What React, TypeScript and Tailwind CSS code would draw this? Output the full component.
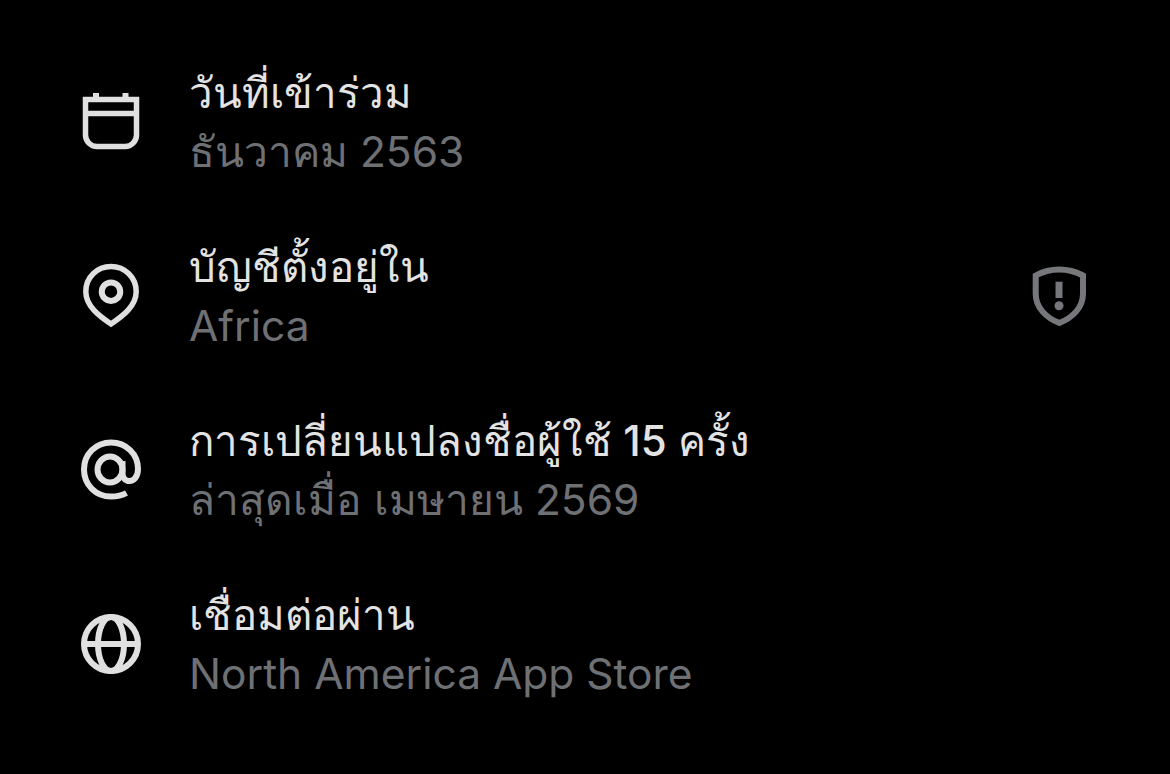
const rows = [
  { title: "วันที่เข้าร่วม", sub: "ธันวาคม 2563", icon: "calendar" },
  { title: "บัญชีตั้งอยู่ใน", sub: "Africa", icon: "pin", shield: true },
  { title: "การเปลี่ยนแปลงชื่อผู้ใช้ 15 ครั้ง", sub: "ล่าสุดเมื่อ เมษายน 2569", icon: "at" },
  { title: "เชื่อมต่อผ่าน", sub: "North America App Store", icon: "globe" },
];

function RowIcon({ name }: { name: string }) {
  if (name === "calendar")
    return (
      <svg viewBox="0 0 60 60" className="h-[60px] w-[60px]" fill="none" stroke="#e0e0e0" strokeWidth="5.5">
        <path d="M4.5 8.5h51V44a11.5 11.5 0 0 1-11.5 11.5H16A11.5 11.5 0 0 1 4.5 44z" />
        <path d="M4.5 22.5h51" />
        <path d="M15 2v7M44.5 2v7" strokeWidth="6" />
      </svg>
    );
  if (name === "pin")
    return (
      <svg viewBox="0 0 60 60" className="h-[60px] w-[60px] overflow-visible" fill="none" stroke="#e0e0e0" strokeWidth="5.5">
        <path d="M30 1.5C16 1.5 4.8 12.5 4.8 26.5 4.8 41 18 51 30 59 42 51 55.2 41 55.2 26.5 55.2 12.5 44 1.5 30 1.5z" />
        <circle cx="30" cy="26.7" r="9.25" strokeWidth="6" />
      </svg>
    );
  if (name === "at")
    return (
      <svg viewBox="0 0 60 60" className="h-[60px] w-[60px] overflow-visible" fill="none" stroke="#e0e0e0" strokeWidth="6">
        <ellipse cx="29" cy="30.5" rx="12.5" ry="13" />
        <path d="M41.5 22v12c0 5 3 8 7 8s8.5-4 8.5-12C57 15 45 3.5 30 3.5S3 15 3 30.5 15 57.5 30 57.5c6 0 11-1 15.5-3.5" />
      </svg>
    );
  return (
    <svg viewBox="0 0 60 60" className="h-[60px] w-[60px] overflow-visible" fill="none" stroke="#e0e0e0" strokeWidth="6">
      <circle cx="30" cy="31" r="27" />
      <ellipse cx="30" cy="31" rx="13" ry="27" />
      <path d="M3 31h54" />
    </svg>
  );
}

export default function App() {
  return (
    <div className="flex h-[774px] w-[1170px] flex-col bg-black pl-[81px] pr-[84px] pt-[68px] font-['Inter','Noto_Sans','DejaVu_Sans',sans-serif]">
      {rows.map((r) => (
        <div key={r.title} className="flex h-[174px] shrink-0 items-start">
          <div className="mt-[23px] shrink-0">
            <RowIcon name={r.icon} />
          </div>
          <div className="ml-[48px] min-w-0 flex-1">
            <div className="text-[42px] leading-[50px] font-medium text-[#e3e3e3]">{r.title}</div>
            <div className="mt-[9px] text-[42.5px] leading-[50px] text-[#6e7074]">{r.sub}</div>
          </div>
          {r.shield && (
            <svg viewBox="0 0 56 60" className="mt-[24px] h-[60px] w-[56px] shrink-0" fill="none" stroke="#75777b" strokeWidth="6">
              <path d="M29.3 3.5C21 3.5 12 6 5.7 9.5V28c0 14 11 24 23.6 29C42 52 53 42 53 28V9.5C46.5 6 37.5 3.5 29.3 3.5z" />
              <path d="M29 15.7V32" strokeWidth="7" />
              <circle cx="29" cy="39.7" r="4.5" fill="#75777b" stroke="none" />
            </svg>
          )}
        </div>
      ))}
    </div>
  );
}
